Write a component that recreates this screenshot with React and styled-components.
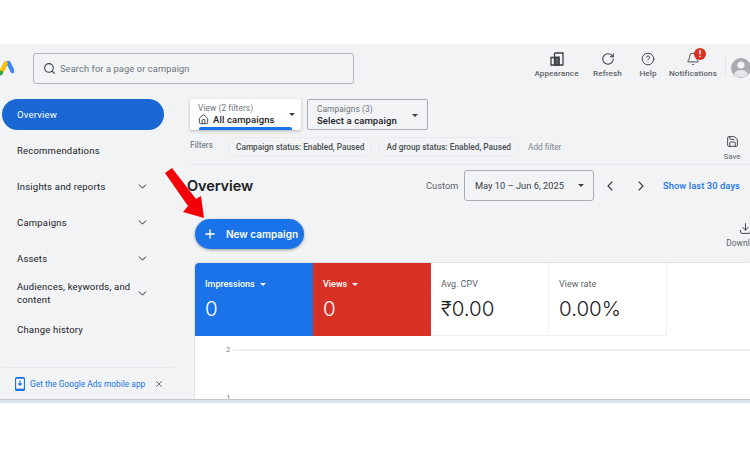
import React from "react";
import styled, { createGlobalStyle } from "styled-components";
import { Search, House, ChevronDown, ChevronLeft, ChevronRight, RotateCw, CircleHelp, Bell, Save, Download, Plus, X } from "lucide-react";

const Global = createGlobalStyle`
  html, body { margin: 0; padding: 0; background: #fff; }
  body { font-family: Roboto, "Liberation Sans", sans-serif; overflow: hidden; }
  * { box-sizing: border-box; }
`;

const Page = styled.div`
  position: relative; width: 750px; height: 450px; padding-top: 44px; background: #fff; overflow: hidden;
`;
const Frame = styled.div`
  height: 355px; background: #f1f3f5; display: flex; flex-direction: column; overflow: hidden;
`;
const BottomEdge = styled.div`
  height: 4px; background: #dfe4ec; border-top: 1px solid #c4c7cb;
`;
const Header = styled.header`
  height: 55px; flex: none; display: flex; align-items: flex-start; position: relative;
`;
const Logo = styled.svg`
  width: 16px; height: 15px; margin: 17px 0 0 -2px; flex: none;
`;
const SearchBox = styled.div`
  width: 321px; height: 31px; margin: 9px 0 0 19px; border: 1px solid #b4b7bb; border-radius: 3px;
  display: flex; align-items: center; gap: 4px; padding-left: 9px; color: #3c4043;
  font-size: 9.3px; letter-spacing: .1px;
  span { color: #70757a; }
`;
const HeaderTools = styled.div`
  margin-left: auto; display: flex; align-items: flex-start; height: 100%; padding-top: 8px;
`;
const Tool = styled.div`
  width: ${p => p.$w}px; display: flex; flex-direction: column; align-items: center; gap: 2px;
  font-size: 8.1px; line-height: 11px; font-weight: 500; color: #5f6368; position: relative; letter-spacing: .1px;
  white-space: nowrap;
  svg { color: #3c4043; display: block; }
`;
const Badge = styled.div`
  position: absolute; top: -4px; left: 31px; width: 12px; height: 12px; border-radius: 50%;
  background: #d93025; color: #fff; font-size: 9px; font-weight: 700; line-height: 12px; text-align: center;
`;
const Divider = styled.div`
  width: 1px; height: 20px; background: #e3e5e8; margin: 4px 5px 0 2px;
`;
const Avatar = styled.svg`
  width: 20px; height: 22px; margin: 5px -1px 0 0; flex: none;
`;
const Body = styled.div`
  flex: 1; display: flex; min-height: 0;
`;
const Sidebar = styled.nav`
  width: 187px; flex: none; display: flex; flex-direction: column; align-items: flex-start; padding-left: 2px;
`;
const NavItem = styled.div`
  width: 162px; height: ${p => p.$h || 36}px; flex: none; display: flex; align-items: center; justify-content: space-between;
  padding: 0 15px 0 15px; font-size: 9.5px; font-weight: 400; line-height: 13px; letter-spacing: .2px; color: #202124;
  svg { color: #202124; flex: none; }
`;
const ActiveItem = styled(NavItem)`
  height: 31px; background: #1967d2; color: #fff; border-radius: 16px; margin-bottom: 2px;
`;
const TwoLine = styled.span`
  width: 118px; display: block;
`;
const Promo = styled.div`
  margin-top: auto; width: 172px; height: 32px; border-top: 1px solid #e8eaed; display: flex; align-items: center;
  padding: 0 0 0 13px; font-size: 8.4px; font-weight: 400; color: #1a73e8; gap: 5px;
  svg.close { margin-left: 4px; color: #3c4043; }
`;
const Main = styled.main`
  flex: 1; min-width: 0; display: flex; flex-direction: column;
`;
const TopSection = styled.section`
  margin-left: 3px; height: 66px; flex: none; border-bottom: 1px solid #e3e5e8; display: flex; justify-content: space-between;
`;
const TopLeft = styled.div`
  display: flex; flex-direction: column; gap: 7px;
`;
const Pickers = styled.div`
  display: flex; gap: 6px;
`;
const Picker = styled.div`
  position: relative; width: ${p => p.$w}px; height: 31px; border-radius: 2px;
  background: ${p => p.$active ? "#fff" : "#f1f3f5"};
  border: ${p => p.$active ? "0" : "1px solid #a9acb0"};
  box-shadow: ${p => p.$active ? "0 1px 3px rgba(60,64,67,.35)" : "none"};
  padding: ${p => p.$active ? "4px 0 0 8px" : "4px 0 0 9px"};
  overflow: hidden;
`;
const PickerLabel = styled.div`
  font-size: 8.3px; line-height: 10px; color: #70757a; letter-spacing: .1px;
`;
const PickerValue = styled.div`
  display: flex; align-items: center; gap: 4px; font-size: 9.5px; font-weight: 500; line-height: 13px; color: #202124; letter-spacing: .1px;
`;
const Caret = styled.i`
  display: block; width: 0; height: 0; border-left: 3.5px solid transparent; border-right: 3.5px solid transparent;
  border-top: 3.5px solid ${p => p.$c || "#3c4043"};
`;
const PickerCaret = styled(Caret)`
  position: absolute; right: ${p => p.$r}px; top: 14px;
`;
const ActiveBar = styled.div`
  position: absolute; left: 9px; right: 9px; bottom: 0; height: 3px; background: #1a73e8; border-radius: 2px 2px 0 0;
`;
const Filters = styled.div`
  display: flex; align-items: flex-start; font-size: 8.2px; color: #5f6368;
`;
const FilterLabel = styled.div`
  width: 38px; padding-top: 3px; font-weight: 500; color: #80868b;
`;
const Chip = styled.div`
  height: 20px; margin-right: 6px; padding: 0 7px; border: 1px solid #e8eaed; border-radius: 10px;
  display: flex; align-items: center; color: #4a4e52; font-weight: 500; white-space: nowrap; font-size: 8.3px;
`;
const AddFilter = styled.div`
  padding: 5px 0 0 3px; color: #80868b; font-size: 8.3px;
`;
const SaveTool = styled.div`
  width: 36px; align-self: flex-end; display: flex; flex-direction: column; align-items: center; gap: 4px; padding-bottom: 3px;
  font-size: 8px; color: #5f6368; font-weight: 400; svg { color: #3c4043; }
`;
const DateRow = styled.div`
  height: 31px; margin-top: 5px; flex: none; display: flex; align-items: center;
`;
const Heading = styled.h1`
  margin: 0 0 1px; font-family: Inter, sans-serif; font-size: 14.5px; font-weight: 600; color: #202124; width: 239px; letter-spacing: -.1px;
`;
const CustomLabel = styled.span`
  width: 38px; font-size: 9.3px; color: #5f6368;
`;
const DateBox = styled.div`
  width: 130px; height: 31px; border: 1px solid #a9acb0; border-radius: 3px; display: flex; align-items: center; justify-content: space-between;
  padding: 0 9px 0 10px; font-size: 9.3px; color: #3c4043;
`;
const Nav = styled.div`
  display: flex; gap: 15px; margin-left: 8px; color: #3c4043; svg { display: block; }
`;
const LastDays = styled.a`
  margin-left: 14px; color: #1a73e8; font-size: 9.3px; font-weight: 500; letter-spacing: .1px; white-space: nowrap;
`;
const ButtonRow = styled.div`
  height: 30px; margin-top: 18px; padding-left: 8px; flex: none; display: flex; justify-content: space-between; align-items: flex-start;
`;
const NewButton = styled.button`
  width: 109px; height: 30px; border: 0; border-radius: 15px; background: #1a73e8; color: #fff; display: flex; align-items: center;
  padding: 0 0 0 8px; gap: 9px; font-family: Inter, sans-serif; font-size: 10px; font-weight: 600; box-shadow: 0 1px 3px rgba(60,64,67,.5);
  white-space: nowrap;
`;
const DownloadTool = styled.div`
  width: 46px; margin-right: -18px; margin-top: 3px; flex: none; display: flex; flex-direction: column; align-items: center; gap: 3px;
  font-size: 8.4px; font-weight: 400; color: #5f6368; svg { color: #3c4043; }
`;
const Panel = styled.section`
  margin: 14px 0 0 8px; flex: 1; background: #fff; min-height: 0; overflow: hidden; box-shadow: -1px -1px 0 #dfe1e4;
`;
const Cards = styled.div`
  display: flex; height: 73px;
`;
const Card = styled.div`
  width: 118px; padding: 15px 0 0 10px; background: ${p => p.$bg || "#fff"}; color: ${p => p.$bg ? "#fff" : "#202124"};
  border-right: ${p => p.$bg ? "0" : "1px solid #eff0f1"}; border-bottom: ${p => p.$bg ? "0" : "1px solid #eff0f1"};
  border-top-left-radius: ${p => p.$round ? "4px" : "0"};
`;
const CardLabel = styled.div`
  display: flex; align-items: center; gap: 5px; font-size: 9px; line-height: 12px; font-weight: ${p => p.$on ? 500 : 400}; color: ${p => p.$on ? "#fff" : "#5f6368"};
`;
const CardValue = styled.div`
  font-family: Inter, sans-serif; font-size: 20.5px; line-height: 24px; margin-top: 7px; font-weight: 300;
`;
const Chart = styled.div`
  padding: 8px 0 0 31px;
`;
const GridRow = styled.div`
  height: 48px; display: flex; align-items: flex-start; gap: 2px; font-size: 8px; line-height: 12px; color: #80868b;
  &::after { content: ""; flex: 1; height: 2px; margin-top: 5px; background: ${p => p.$line ? "#ebedef" : "transparent"}; }
`;
const Arrow = styled.svg`
  position: absolute; left: 160px; top: 165px; width: 50px; height: 58px;
`;

const nav = [
  ["Insights and reports", 1], ["Campaigns", 1], ["Assets", 1],
];

export default function App() {
  return (
    <Page>
      <Global />
      <Frame>
        <Header>
          <Logo viewBox="0 0 16 15">
            <path d="M10.2 1.5 14.6 10" stroke="#4285f4" strokeWidth="4.4" strokeLinecap="round" />
            <path d="M7.6 2.5 3.6 10.5" stroke="#fbbc04" strokeWidth="4.4" strokeLinecap="round" />
            <circle cx="2.6" cy="12" r="2.4" fill="#34a853" />
          </Logo>
          <SearchBox>
            <Search size={13} strokeWidth={2} />
            <span>Search for a page or campaign</span>
          </SearchBox>
          <HeaderTools>
            <Tool $w={51}>
              <svg width="14" height="14" viewBox="0 0 14 14" fill="none" stroke="#3c4043" strokeWidth="1.3">
                <path d="M4.5 1h8.5v12H1V5.5h3.5V13M4.5 5.5V1M9 4.5V13M4.5 5.5H9" />
                <path d="M5 5.5h4V13H5z" fill="#5f6368" />
              </svg>
              Appearance
            </Tool>
            <Tool $w={51}>
              <RotateCw size={14} strokeWidth={1.8} />
              Refresh
            </Tool>
            <Tool $w={30}>
              <CircleHelp size={14} strokeWidth={1.6} />
              Help
            </Tool>
            <Tool $w={60}>
              <Bell size={14} strokeWidth={1.6} />
              <Badge>!</Badge>
              Notifications
            </Tool>
            <Divider />
            <Avatar viewBox="0 0 20 22">
              <circle cx="10" cy="11" r="10" fill="#a9abae" />
              <circle cx="10" cy="8" r="3.6" fill="#f1f3f5" />
              <path d="M3 17.5C4 14 7 13 10 13s6 1 7 4.5A10 10 0 0 1 3 17.5z" fill="#e4e5e7" />
            </Avatar>
          </HeaderTools>
        </Header>
        <Body>
          <Sidebar>
            <ActiveItem>Overview</ActiveItem>
            <NavItem>Recommendations</NavItem>
            {nav.map(([t]) => (
              <NavItem key={t}>{t}<ChevronDown size={13} strokeWidth={1.8} /></NavItem>
            ))}
            <NavItem $h={34}><TwoLine>Audiences, keywords, and content</TwoLine><ChevronDown size={13} strokeWidth={1.8} /></NavItem>
            <NavItem $h={38}>Change history</NavItem>
            <Promo>
              <svg width="10" height="14" viewBox="0 0 10 14"><rect width="10" height="14" rx="1.5" fill="#1a73e8" /><rect x="1.2" y="1.8" width="7.6" height="9.8" fill="#fff" /><path d="M5 3.5v4M3.2 6.4 5 8.4l1.8-2" stroke="#1a73e8" strokeWidth="1.2" fill="none" /></svg>
              <span>Get the Google Ads mobile app</span>
              <X className="close" size={10} strokeWidth={1.8} />
            </Promo>
          </Sidebar>
          <Main>
            <TopSection>
              <TopLeft>
                <Pickers>
                  <Picker $w={111} $active>
                    <PickerLabel>View (2 filters)</PickerLabel>
                    <PickerValue><House size={11} strokeWidth={1.7} />All campaigns</PickerValue>
                    <PickerCaret $r={6} />
                    <ActiveBar />
                  </Picker>
                  <Picker $w={121}>
                    <PickerLabel>Campaigns (3)</PickerLabel>
                    <PickerValue>Select a campaign</PickerValue>
                    <PickerCaret $r={9} />
                  </Picker>
                </Pickers>
                <Filters>
                  <FilterLabel>Filters</FilterLabel>
                  <Chip>Campaign status: Enabled, Paused</Chip>
                  <Chip>Ad group status: Enabled, Paused</Chip>
                  <AddFilter>Add filter</AddFilter>
                </Filters>
              </TopLeft>
              <SaveTool><Save size={13} strokeWidth={1.7} />Save</SaveTool>
            </TopSection>
            <DateRow>
              <Heading>Overview</Heading>
              <CustomLabel>Custom</CustomLabel>
              <DateBox>May 10 – Jun 6, 2025<Caret /></DateBox>
              <Nav>
                <ChevronLeft size={16} strokeWidth={1.7} />
                <ChevronRight size={16} strokeWidth={1.7} />
              </Nav>
              <LastDays>Show last 30 days</LastDays>
            </DateRow>
            <ButtonRow>
              <NewButton><Plus size={14} strokeWidth={2.4} />New campaign</NewButton>
              <DownloadTool><Download size={13} strokeWidth={1.8} />Download</DownloadTool>
            </ButtonRow>
            <Panel>
              <Cards>
                <Card $bg="#1a73e8" $round>
                  <CardLabel $on>Impressions <Caret $c="#fff" /></CardLabel>
                  <CardValue>0</CardValue>
                </Card>
                <Card $bg="#d93025">
                  <CardLabel $on>Views <Caret $c="#fff" /></CardLabel>
                  <CardValue>0</CardValue>
                </Card>
                <Card>
                  <CardLabel>Avg. CPV</CardLabel>
                  <CardValue>₹0.00</CardValue>
                </Card>
                <Card>
                  <CardLabel>View rate</CardLabel>
                  <CardValue>0.00%</CardValue>
                </Card>
              </Cards>
              <Chart>
                <GridRow $line>2</GridRow>
                <GridRow>1</GridRow>
              </Chart>
            </Panel>
          </Main>
        </Body>
      </Frame>
      <BottomEdge />
      <Arrow viewBox="0 0 50 58">
        <polygon points="5,8 12,3 36,34 41,31 44,53 23,47 28,41" fill="#f40009" />
      </Arrow>
    </Page>
  );
}
